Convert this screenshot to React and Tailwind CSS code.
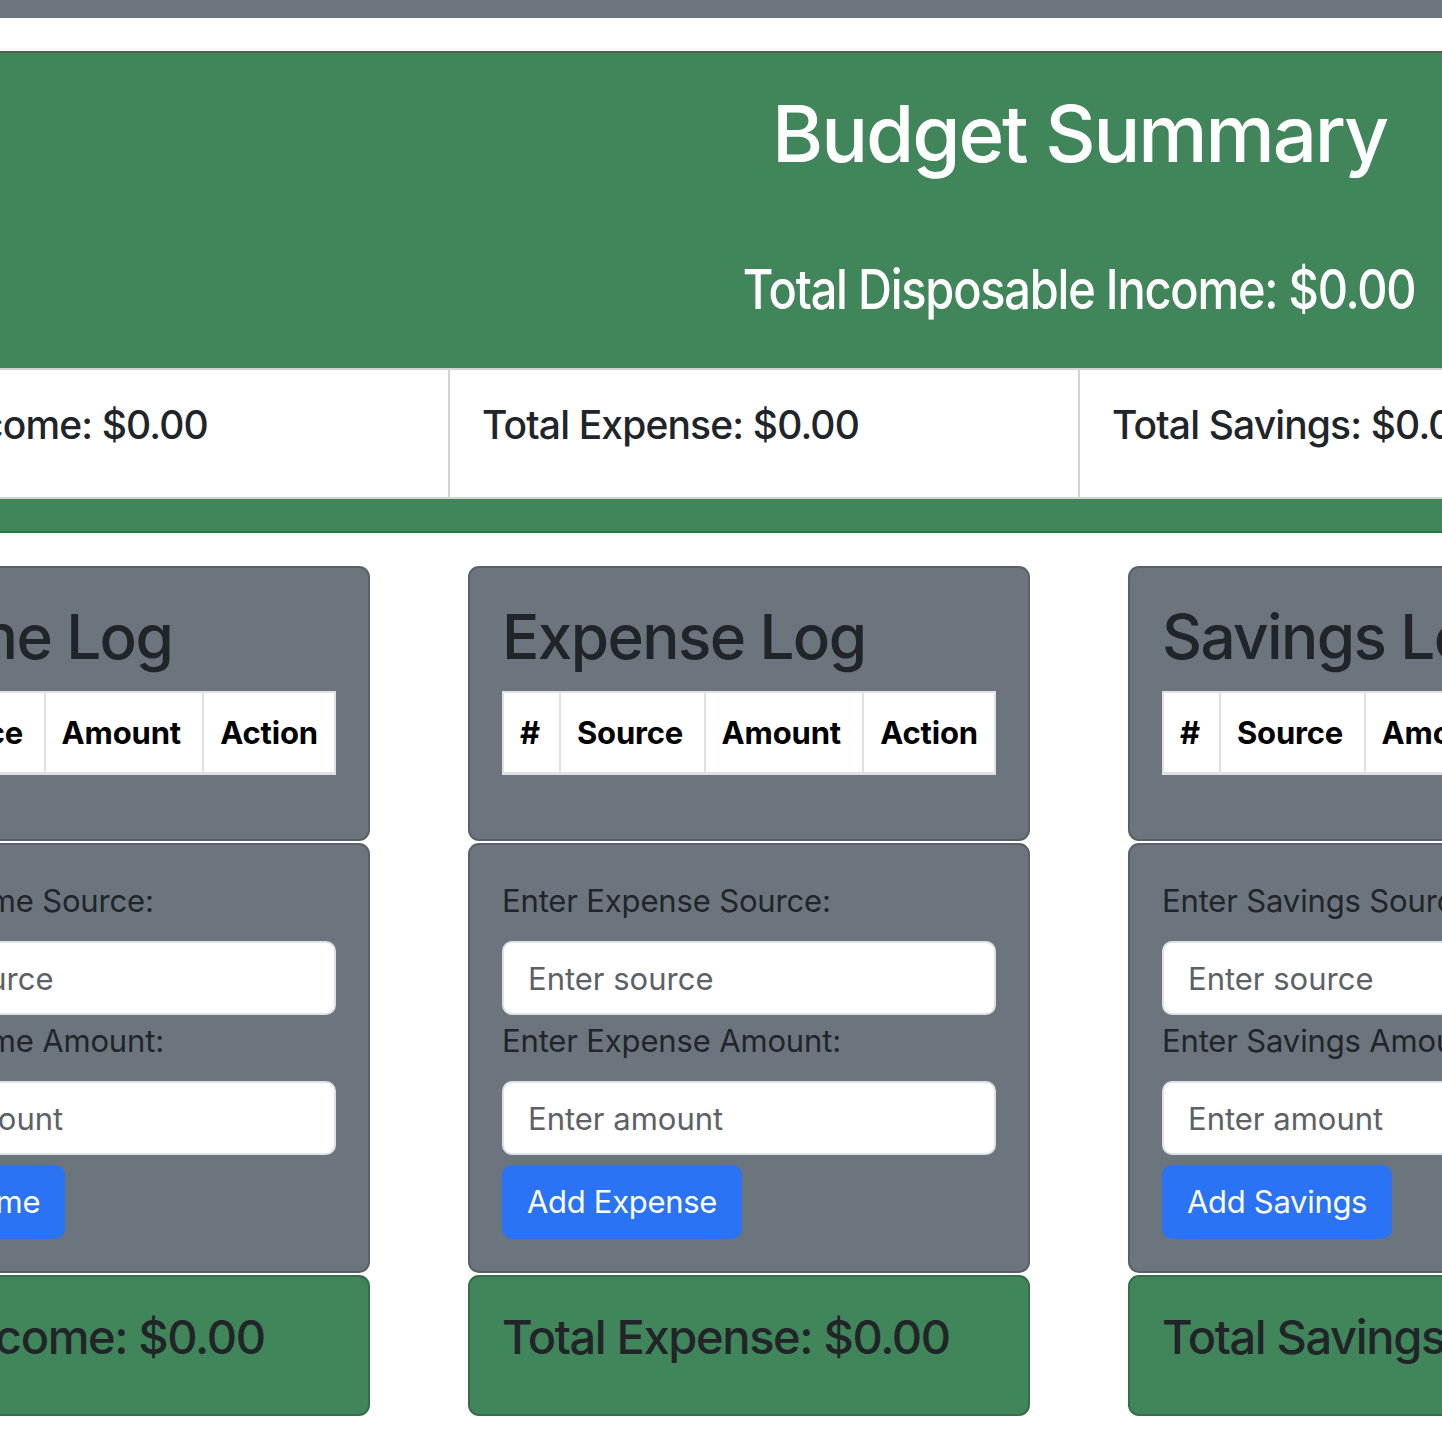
import React from "react";

const logs = ["Income", "Expense", "Savings"];

function LogHeader() {
  const cells = [
    { label: "#", w: "w-[55px]" },
    { label: "Source", w: "w-[145px]" },
    { label: "Amount", w: "w-[159px]" },
    { label: "Action", w: "flex-1" },
  ];
  return (
    <div className="flex bg-white border-2 border-b-[3px] border-[#dee2e6]">
      {cells.map((c, i) => (
        <div
          key={c.label}
          className={`${c.w} ${i > 0 ? "border-l-2 border-[#dee2e6]" : ""} px-[16px] py-[16px] text-[31px] leading-[47px] font-bold text-black whitespace-nowrap tracking-[-0.005em]`}
        >
          {c.label}
        </div>
      ))}
    </div>
  );
}

function LogColumn({ kind }) {
  return (
    <div className="w-[562px] shrink-0 flex flex-col gap-[2px]">
      {/* log table */}
      <div className="rounded-[11px] border-2 border-[#5a6067] bg-[#6c757d] p-[32px]">
        <h2 className="text-[62px] leading-[1.2] font-medium tracking-[-0.026em] text-[#212529] mb-[17px] whitespace-nowrap">
          {kind} Log
        </h2>
        <div className="mb-[32px]">
          <LogHeader />
        </div>
      </div>

      {/* form */}
      <div className="rounded-[11px] border-2 border-[#5a6067] bg-[#6c757d] p-[32px]">
        <label className="block text-[31px] leading-[48px] mb-[16px] tracking-[-0.005em] text-[#212529] whitespace-nowrap">
          Enter {kind} Source:
        </label>
        <input
          type="text"
          placeholder="Enter source"
          className="block w-full h-[74px] rounded-[10px] border-2 border-[#dee2e6] bg-white px-[24px] text-[31px] text-[#212529] placeholder:text-[#5c6167] outline-none"
        />
        <label className="block mt-[2px] text-[31px] leading-[48px] mb-[16px] tracking-[-0.005em] text-[#212529] whitespace-nowrap">
          Enter {kind} Amount:
        </label>
        <input
          type="text"
          placeholder="Enter amount"
          className="block w-full h-[74px] rounded-[10px] border-2 border-[#dee2e6] bg-white px-[24px] text-[31px] text-[#212529] placeholder:text-[#5c6167] outline-none"
        />
        <button className="mt-[10px] h-[74px] rounded-[10px] bg-[#2a73f4] px-[25px] text-[31px] tracking-[-0.01em] text-white whitespace-nowrap">
          Add {kind}
        </button>
      </div>

      {/* total */}
      <div className="rounded-[11px] border-2 border-[#356f4a] bg-[#41855a] p-[32px]">
        <h4 className="text-[47px] leading-[1.2] font-medium tracking-[-0.029em] text-[#212529] mb-[16px] whitespace-nowrap">
          Total {kind}: $0.00
        </h4>
      </div>
    </div>
  );
}

export default function App() {
  return (
    <div className="w-[1442px] h-[1442px] overflow-hidden bg-white font-[Inter,sans-serif]">
      <div className="h-[18px] bg-[#6c757d]" />

      {/* summary band */}
      <section className="mt-[33px] border-y-2 border-[#33704a] bg-[#41855a]">
        <div className="ml-[417px] w-[1325px] text-center text-white pt-[34px] pb-[46px]">
          <h1 className="text-[78px] leading-[1.2] font-medium tracking-[-0.027em] whitespace-nowrap">
            Budget Summary
          </h1>
          <h3 className="mt-[76px] text-[54.6px] leading-[1.2] font-medium whitespace-nowrap">
            <span className="inline-block scale-x-[0.86] tracking-[-0.026em]">
              Total Disposable Income: $0.00
            </span>
          </h3>
        </div>
        <div className="ml-[-182px] w-[1894px] flex bg-white border-y-2 border-[#d3d4d5]">
          {logs.map((k, i) => (
            <div
              key={k}
              className={`w-[630px] shrink-0 border-l-2 ${i === 2 ? "border-r-2" : ""} border-[#d3d4d5] p-[32px]`}
            >
              <h5 className="text-[39px] leading-[1.2] font-medium tracking-[-0.022em] text-[#212529] mb-[16px] whitespace-nowrap">
                Total {k}: $0.00
              </h5>
            </div>
          ))}
        </div>
        <div className="h-[32px]" />
      </section>

      {/* log columns */}
      <div className="mt-[33px] ml-[-192px] flex gap-[98px]">
        {logs.map((k) => (
          <LogColumn key={k} kind={k} />
        ))}
      </div>
    </div>
  );
}
